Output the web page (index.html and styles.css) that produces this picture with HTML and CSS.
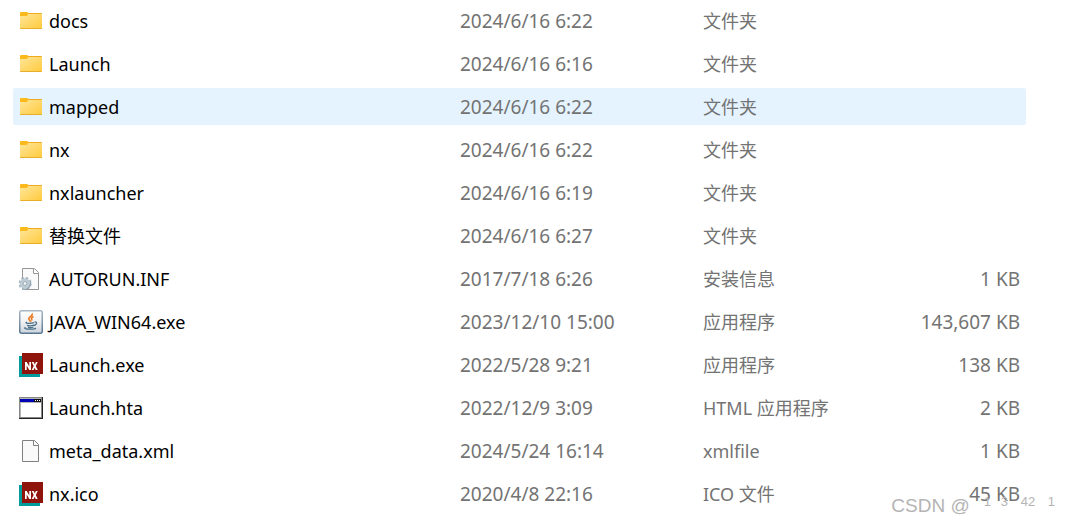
FILE: index.html
```
<!DOCTYPE html>
<html lang="zh-CN">
<head>
<meta charset="utf-8">
<meta name="viewport" content="width=device-width, initial-scale=1">
<title>文件</title>
<link rel="stylesheet" href="styles.css">
</head>
<body>
<svg class="defs" width="0" height="0" aria-hidden="true">
  <defs>
    <linearGradient id="folder-face" x1="0" y1="0" x2="1" y2="1">
      <stop offset="0" stop-color="#ffe699"/><stop offset="1" stop-color="#ffca3d"/>
    </linearGradient>
    <linearGradient id="java-face" x1="0" y1="0" x2="0" y2="1">
      <stop offset="0" stop-color="#ffffff"/><stop offset="0.5" stop-color="#f0f1f3"/><stop offset="1" stop-color="#cbd3dc"/>
    </linearGradient>
    <linearGradient id="java-edge" x1="0" y1="0" x2="0" y2="1">
      <stop offset="0" stop-color="#a7b6c4"/><stop offset="1" stop-color="#587690"/>
    </linearGradient>
    <symbol id="folder" viewBox="0 0 24 24">
      <path d="M1 4Q1 3 2 3H8Q9 3 9 4V7H1Z" fill="#fbb91c"/>
      <path d="M9 4H22Q23 4 23 5V6H9Z" fill="#efaa1d"/>
      <path d="M1 7H8L9 5H23V19Q23 20 22 20H2Q1 20 1 19Z" fill="url(#folder-face)"/>
      <path d="M1 19H23Q23 20 22 20H2Q1 20 1 19Z" fill="#e9ad2c"/>
    </symbol>
    <symbol id="page" viewBox="0 0 24 24">
      <path d="M3.500 1.500H15.500L19.500 5.500V22.500H3.500Z" fill="#fafafa" stroke="#808080"/>
      <path d="M14.500 1.500V6.500H19.500" fill="#fff" stroke="#808080"/>
    </symbol>
    <symbol id="inf" viewBox="0 0 24 24">
      <path d="M3.500 1.500H15.500L19.500 5.500V22.500H3.500Z" fill="#fafafa" stroke="#969696"/>
      <path d="M14.500 1.500V6.500H19.500" fill="#fff" stroke="#969696"/>
      <circle cx="6" cy="16.500" r="5.400" fill="none" stroke="#9fb1bd" stroke-width="2.400" stroke-dasharray="2.400 1.840"/>
      <circle cx="6" cy="16.500" r="3.800" fill="#dce6ed" stroke="#bccad4" stroke-width="3"/>
      <circle cx="6" cy="16.500" r="1.900" fill="#f4f7f9" stroke="#8c9eaa" stroke-width="0.900"/>
      <path d="M7 22Q12 21 11.500 15" fill="none" stroke="#93a6b3" stroke-width="1.200"/>
    </symbol>
    <symbol id="java" viewBox="0 0 24 24">
      <rect x="0.750" y="0.750" width="22.500" height="22.500" rx="2" fill="url(#java-face)" stroke="url(#java-edge)" stroke-width="1.500"/>
      <path d="M13 3.500C14.500 6.500 8.500 7 10 9.500L12 12M14.500 6.500C11.500 8 12.500 9 13 10.500" fill="none" stroke="#ed7f2b" stroke-width="1.700"/>
      <path d="M8 12Q5.500 13 9 13.300Q12 13.600 15 12.700M8 15.400Q11.500 16.500 15 15.200M15.500 12Q18 11.600 17.500 13.500Q17 15 15 15.500M6.500 17.200Q4.500 18.500 8 19Q13 19.600 17 18.300M9 17.300Q12 18 14.500 17" fill="none" stroke="#4b718a" stroke-width="1.300"/>
    </symbol>
    <symbol id="nx" viewBox="0 0 24 24">
      <path d="M0 3H21V24H0Z" fill="#009c9c"/>
      <path d="M3 0H24V21H3Z" fill="#8f140c"/>
      <path d="M6 17V9H7.700L10.300 13.500V9H12V17H10.300L7.700 12.500V17Z" fill="#fff"/>
      <path d="M12.700 9H14.700L15.800 11.500L16.900 9H18.700L16.800 13L18.700 17H16.700L15.700 14.700L14.600 17H12.700L14.700 13Z" fill="#fff"/>
    </symbol>
    <symbol id="hta" viewBox="0 0 24 24">
      <path d="M0 1H24V23H0Z" fill="#222"/>
      <path d="M0 1H23V22H0Z" fill="#888"/>
      <path d="M1 2H22V21H1Z" fill="#b4b4b4"/>
      <path d="M2 7H22V21H2Z" fill="#fff"/>
      <path d="M1 3H22V6H1Z" fill="#0000b4"/>
      <path d="M15 3H22V6H15Z" fill="#111"/>
      <path d="M16 4H17V5H16ZM18 4H19V5H18ZM20 4H21V5H20Z" fill="#fff"/>
    </symbol>
  </defs>
</svg>
<main class="file-list">
<table class="files">
  <colgroup><col class="col-name"><col class="col-date"><col class="col-type"><col class="col-size"></colgroup>
  <tbody>
    <tr><td><span class="file"><svg class="icon"><use href="#folder"/></svg>docs</span></td><td class="meta">2024/6/16 6:22</td><td class="meta kind">文件夹</td><td></td></tr>
    <tr><td><span class="file"><svg class="icon"><use href="#folder"/></svg>Launch</span></td><td class="meta">2024/6/16 6:16</td><td class="meta kind">文件夹</td><td></td></tr>
    <tr class="hovered"><td><span class="file"><svg class="icon"><use href="#folder"/></svg>mapped</span></td><td class="meta">2024/6/16 6:22</td><td class="meta kind">文件夹</td><td></td></tr>
    <tr><td><span class="file"><svg class="icon"><use href="#folder"/></svg>nx</span></td><td class="meta">2024/6/16 6:22</td><td class="meta kind">文件夹</td><td></td></tr>
    <tr><td><span class="file"><svg class="icon"><use href="#folder"/></svg>nxlauncher</span></td><td class="meta">2024/6/16 6:19</td><td class="meta kind">文件夹</td><td></td></tr>
    <tr><td><span class="file"><svg class="icon"><use href="#folder"/></svg>替换文件</span></td><td class="meta">2024/6/16 6:27</td><td class="meta kind">文件夹</td><td></td></tr>
    <tr><td><span class="file"><svg class="icon"><use href="#inf"/></svg>AUTORUN.INF</span></td><td class="meta">2017/7/18 6:26</td><td class="meta kind">安装信息</td><td class="meta size">1 KB</td></tr>
    <tr><td><span class="file"><svg class="icon"><use href="#java"/></svg>JAVA_WIN64.exe</span></td><td class="meta">2023/12/10 15:00</td><td class="meta kind">应用程序</td><td class="meta size">143,607 KB</td></tr>
    <tr><td><span class="file"><svg class="icon"><use href="#nx"/></svg>Launch.exe</span></td><td class="meta">2022/5/28 9:21</td><td class="meta kind">应用程序</td><td class="meta size">138 KB</td></tr>
    <tr><td><span class="file"><svg class="icon"><use href="#hta"/></svg>Launch.hta</span></td><td class="meta">2022/12/9 3:09</td><td class="meta kind">HTML 应用程序</td><td class="meta size">2 KB</td></tr>
    <tr><td><span class="file"><svg class="icon"><use href="#page"/></svg>meta_data.xml</span></td><td class="meta">2024/5/24 16:14</td><td class="meta kind">xmlfile</td><td class="meta size">1 KB</td></tr>
    <tr><td><span class="file"><svg class="icon"><use href="#nx"/></svg>nx.ico</span></td><td class="meta">2020/4/8 22:16</td><td class="meta kind">ICO 文件</td><td class="meta size">45 KB</td></tr>
  </tbody>
</table>
<div class="watermark"><span>CSDN @</span><span class="handle"><span>1</span><span>3</span><span>42</span><span>1</span></span></div>
</main>
</body>
</html>
```
FILE: styles.css
```
body {
  margin: 0;
  background: #fff;
  color: #000;
  font-family: "Noto Sans", "Noto Sans CJK SC", sans-serif;
  font-size: 18px;
  line-height: 24px;
}

.defs {
  position: absolute;
}

.file-list {
  position: relative;
  padding: 2px 40px 4px 13px;
}

.files {
  width: 100%;
  table-layout: fixed;
  border-collapse: separate;
  border-spacing: 0 6px;
  margin: -6px 0;
}

.col-name {
  width: 447px;
}

.col-date {
  width: 243px;
}

.col-type {
  width: 180px;
}

.files td {
  height: 37px;
  padding: 0;
  white-space: nowrap;
  vertical-align: middle;
}

.hovered td {
  background: #e5f3ff;
}

.hovered td:first-child {
  border-radius: 2px 0 0 2px;
}

.hovered td:last-child {
  border-radius: 0 2px 2px 0;
}

.file {
  display: flex;
  align-items: center;
  gap: 6px;
  padding-left: 6px;
}

.icon {
  flex: none;
  width: 24px;
  height: 24px;
}

.files .meta {
  color: #737373;
  font-size: 19px;
}

.files .kind {
  font-size: 18px;
}

.files .size {
  padding-right: 6px;
  text-align: right;
}

.watermark {
  position: absolute;
  right: 11px;
  bottom: 0;
  display: flex;
  gap: 14px;
  color: #b4b4b4;
  font-family: "Liberation Sans", sans-serif;
  font-size: 19px;
  line-height: 20px;
}

.handle {
  display: grid;
  grid-template-columns: 17px 20px 27px auto;
  font-size: 13px;
  line-height: 12px;
}
```
